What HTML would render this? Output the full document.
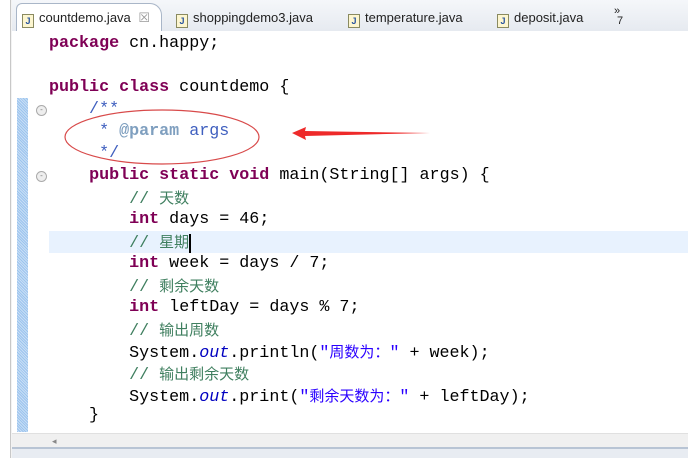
<!DOCTYPE html>
<html><head><meta charset="utf-8"><style>
body{margin:0;width:688px;height:458px;overflow:hidden;background:#f3f3f3;position:relative;font-family:"Liberation Sans","Noto Sans CJK SC",sans-serif}
.abs{position:absolute}
.tabbar{left:12px;top:0;width:676px;height:31px;background:linear-gradient(#f5f7fa,#e6eaf0);border-bottom:1px solid #a9b6c8}
.tab{position:absolute;top:8px;font-size:13px;color:#222;height:20px;line-height:20px}
.ico{display:inline-block;width:10px;height:12px;border:1px solid #8a8a60;background:#fdf6d0;vertical-align:-2px;margin-right:5px;font-size:9px;line-height:12px;text-align:center;color:#2a55a0;font-weight:bold}
.code{left:12px;top:31px;width:676px;height:402px;background:#fff}
.ln{position:absolute;left:49px;font-family:"Liberation Mono","Noto Sans CJK SC",monospace;font-size:16.7px;white-space:pre;height:22px;line-height:22px;color:#000}
.k{color:#7f0055;font-weight:bold}
.c{color:#3f7f5f}
.j{color:#3f5fbf}
.jt{color:#7f9fbf;font-weight:bold}
.s{color:#2a00ff}
.o{color:#0000c0;font-style:italic}
.cj{font-family:"Noto Sans CJK SC",sans-serif;font-size:15px}
</style></head><body>
<div class="abs" style="left:0;top:0;width:10px;height:458px;background:#fff;border-right:1px solid #c8c8c8"></div>
<div class="abs tabbar"></div>
<div class="abs" style="left:16px;top:3px;width:144px;height:28px;background:#fff;border:1px solid #a9b6c8;border-bottom:none;border-radius:6px 12px 0 0"></div>
<div class="tab" style="left:22px"><span class="ico">J</span>countdemo.java <span style="color:#999;margin-left:4px">☒</span></div>
<div class="tab" style="left:176px"><span class="ico">J</span>shoppingdemo3.java</div>
<div class="tab" style="left:348px"><span class="ico">J</span>temperature.java</div>
<div class="tab" style="left:497px"><span class="ico">J</span>deposit.java</div>
<div class="tab" style="left:614px;top:6px;font-size:11px;line-height:10px">»<br>&nbsp;7</div>
<div class="abs code"></div>
<div class="abs" style="left:17px;top:98px;width:11px;height:334px;background:repeating-linear-gradient(45deg,#9cc4ee 0 1px,#c8def5 1px 2px)"></div>
<div class="abs" style="left:49px;top:231px;width:639px;height:22px;background:#e8f2fe"></div>
<div class="abs" style="left:36px;top:105px;width:9px;height:9px;border-radius:50%;border:1px solid #aaa;background:#eee;font-size:8px;line-height:8px;text-align:center;color:#777">-</div>
<div class="abs" style="left:36px;top:171px;width:9px;height:9px;border-radius:50%;border:1px solid #aaa;background:#eee;font-size:8px;line-height:8px;text-align:center;color:#777">-</div>
<div class="ln" style="top:33px"><span class="k">package</span> cn.happy;</div>
<div class="ln" style="top:77px"><span class="k">public class</span> countdemo {</div>
<div class="ln j" style="top:99px">    /**</div>
<div class="ln j" style="top:121px">     * <span class="jt">@param</span> args</div>
<div class="ln j" style="top:143px">     */</div>
<div class="ln" style="top:165px">    <span class="k">public static void</span> main(String[] args) {</div>
<div class="ln" style="top:187px">        <span class="c">// <span class="cj">天数</span></span></div>
<div class="ln" style="top:209px">        <span class="k">int</span> days = 46;</div>
<div class="ln" style="top:231px">        <span class="c">// <span class="cj">星期</span></span><span style="border-left:2px solid #000"></span></div>
<div class="ln" style="top:253px">        <span class="k">int</span> week = days / 7;</div>
<div class="ln" style="top:275px">        <span class="c">// <span class="cj">剩余天数</span></span></div>
<div class="ln" style="top:297px">        <span class="k">int</span> leftDay = days % 7;</div>
<div class="ln" style="top:319px">        <span class="c">// <span class="cj">输出周数</span></span></div>
<div class="ln" style="top:341px">        System.<span class="o">out</span>.println(<span class="s">"<span class="cj">周数为：</span>"</span> + week);</div>
<div class="ln" style="top:363px">        <span class="c">// <span class="cj">输出剩余天数</span></span></div>
<div class="ln" style="top:385px">        System.<span class="o">out</span>.print(<span class="s">"<span class="cj">剩余天数为：</span>"</span> + leftDay);</div>
<div class="ln" style="top:405px">    }</div>
<div class="abs" style="left:12px;top:433px;width:676px;height:14px;background:#f0f0f0;border-top:1px solid #e0e0e0;font-size:9px;color:#888;line-height:14px;padding-left:40px;box-sizing:border-box">◂</div>
<div class="abs" style="left:12px;top:447px;width:676px;height:2px;background:#b8c4d4"></div>
<div class="abs" style="left:12px;top:449px;width:676px;height:9px;background:#e8ecf2"></div>
<svg class="abs" style="left:0;top:0" width="688" height="458">
<ellipse cx="162" cy="137" rx="97" ry="27" fill="none" stroke="#d84a4a" stroke-width="1.2"/>
<path d="M430 133 L305 131 L306 127 L292 133 L306 140 L305 136 Z" fill="#ee2a2a"/>
</svg>
</body></html>
